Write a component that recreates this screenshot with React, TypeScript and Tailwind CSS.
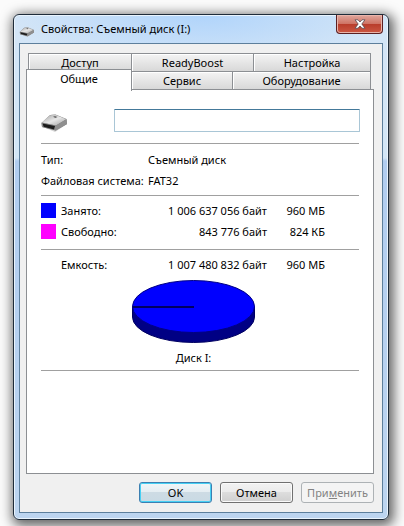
import React from "react";

type UsageRow = {
  label: string;
  bytes: string;
  size: string;
  color?: string;
};

const topTabs = [
  { label: "Доступ", className: "w-[104px]" },
  { label: "ReadyBoost", className: "w-[123px]" },
  { label: "Настройка", className: "flex-1" },
];

const usage: UsageRow[] = [
  { label: "Занято:", bytes: "1 006 637 056 байт", size: "960 МБ", color: "bg-[#0000ff]" },
  { label: "Свободно:", bytes: "843 776 байт", size: "824 КБ", color: "bg-[#ff00ff]" },
];

const capacity: UsageRow[] = [
  { label: "Емкость:", bytes: "1 007 480 832 байт", size: "960 МБ" },
];

const tabClass =
  "-ml-px h-[19px] border border-[#8c8f93] bg-gradient-to-b from-[#f4f4f4] to-[#d8d8d8] text-center shadow-[inset_1px_1px_0_#fff]";

const buttonClass = "h-[21px] w-[73px] rounded-[3px] border text-center";

function DriveIcon({ className }: { className: string }) {
  return (
    <svg viewBox="0 0 27 18" className={className} aria-hidden="true">
      <defs>
        <linearGradient id="driveTop" x1="0" y1="0" x2="1" y2="1">
          <stop offset="0" stopColor="#a0a0a0" />
          <stop offset="0.5" stopColor="#e6e6e6" />
          <stop offset="1" stopColor="#a0a0a0" />
        </linearGradient>
      </defs>
      <path d="M2 13 L14 18 L26 10 L25 8 L13 14Z" fill="#bbb" opacity="0.6" />
      <path d="M0.5 9 L8.5 1.4 Q9.5 0.8 11 0.8 L14.5 0.4 L25.5 5 L26 10 L14.5 16.6 L1 13Z" fill="#7c7c7c" />
      <path d="M0.8 8.6 L8.5 1.6 Q9.5 1 11 1 L14.5 0.8 L25.2 5.2 L15 11.4Z" fill="url(#driveTop)" />
      <path d="M0.5 8.6 L15 11.4 L15 16.6 L1 13Z" fill="#8d8d8d" />
      <path d="M1.6 9.4 L14 12 L13 15.4 L2.6 12.8Z" fill="#1c1c1c" />
      <path d="M15 11.4 L25.5 5.2 L26 10 L15 16.6Z" fill="#8f8f8f" />
      <path d="M12 2.8 L14 2 L16.4 3 L14.4 4Z" fill="#666" />
    </svg>
  );
}

function PieChart() {
  return (
    <svg viewBox="0 0 123 63" className="h-[63px] w-[123px]" role="img" aria-label="Диск I:">
      <path d="M0.5 26.5 V37 A61 25.5 0 0 0 122.5 37 V26.5Z" fill="#000084" stroke="#000060" />
      <ellipse cx="61.5" cy="26.5" rx="61" ry="26" fill="#0000ff" stroke="#000084" />
      <path d="M0.5 27 H62" stroke="#000060" strokeWidth="2" />
    </svg>
  );
}

function TitleBar() {
  return (
    <header className="flex h-7 items-start">
      <DriveIcon className="mt-3 h-[10px] w-4" />
      <h1 className="mt-1.5 ml-1.5 flex-1 text-[11px] leading-4 text-black">
        Свойства: Съемный диск (I:)
      </h1>
      <button
        type="button"
        aria-label="Закрыть"
        className="flex h-[19px] w-[47px] items-center justify-center rounded-b-[4px] border border-t-0 border-[#5b1f22] bg-[linear-gradient(#e0a79d_0%,#cf7465_48%,#b83c2b_50%,#cc5843_100%)] shadow-[inset_0_0_0_1px_#e9b5ab]"
      >
        <svg viewBox="0 0 12 10" className="h-[10px] w-3" aria-hidden="true">
          <path
            d="M1 0.8 H4 L6 3 L8 0.8 H11 L7.8 5 L11 9.2 H8 L6 7 L4 9.2 H1 L4.2 5Z"
            fill="#fff"
            stroke="#574a50"
            strokeWidth="0.8"
          />
        </svg>
      </button>
    </header>
  );
}

function Tabs() {
  return (
    <div role="tablist">
      <div className="flex pr-[3px] pl-[3px]">
        {topTabs.map((tab) => (
          <button key={tab.label} type="button" role="tab" className={`${tabClass} ${tab.className}`}>
            {tab.label}
          </button>
        ))}
      </div>
      <div className="-mt-px flex items-end pr-[3px]">
        <button
          type="button"
          role="tab"
          aria-selected="true"
          className="relative z-10 -mt-[2px] -mb-px h-[22px] w-[106px] border border-b-0 border-[#8c8f93] bg-white pb-[3px] text-center"
        >
          Общие
        </button>
        <button type="button" role="tab" className={`${tabClass} w-[102px]`}>
          Сервис
        </button>
        <button type="button" role="tab" className={`${tabClass} flex-1`}>
          Оборудование
        </button>
      </div>
    </div>
  );
}

function Rule() {
  return <hr className="border-t border-[#a0a0a0]" />;
}

function UsageTable({ rows }: { rows: UsageRow[] }) {
  return (
    <table className="w-full table-fixed">
      <tbody>
        {rows.map((row) => (
          <tr key={row.label} className="h-[21px]">
            <td className="w-5">
              {row.color && <div className={`h-[15px] w-[15px] ${row.color}`} />}
            </td>
            <th scope="row" className="w-[82px] text-left font-normal">
              {row.label}
            </th>
            <td className="w-[124px] text-right">{row.bytes}</td>
            <td className="w-[58px] text-right">{row.size}</td>
            <td />
          </tr>
        ))}
      </tbody>
    </table>
  );
}

function GeneralPanel() {
  return (
    <section
      role="tabpanel"
      className="-mt-px border border-[#8c8f93] bg-white px-[14px] pt-[19px] pb-[102px]"
    >
      <div className="flex items-center">
        <DriveIcon className="mt-1 h-[18px] w-[27px]" />
        <input
          type="text"
          aria-label="Метка тома"
          className="-mr-px ml-[46px] h-[23px] min-w-0 flex-1 rounded-[1px] border border-[#a9c6d6] border-t-[#44799a] bg-white px-1 outline-none"
        />
      </div>
      <div className="mt-[11px]">
        <Rule />
      </div>
      <dl className="grid grid-cols-[107px_1fr] gap-y-[5px] pt-2 pb-[6px]">
        <dt>Тип:</dt>
        <dd>Съемный диск</dd>
        <dt>Файловая система:</dt>
        <dd>FAT32</dd>
      </dl>
      <Rule />
      <div className="pt-1 pb-[7px]">
        <UsageTable rows={usage} />
      </div>
      <Rule />
      <div className="pt-1 pb-[5px]">
        <UsageTable rows={capacity} />
      </div>
      <figure className="mb-1 ml-[91px] w-[123px] text-center">
        <PieChart />
        <figcaption className="mt-[7px]">Диск I:</figcaption>
      </figure>
      <Rule />
    </section>
  );
}

function Footer() {
  return (
    <footer className="flex justify-end gap-2 pt-2">
      <button
        type="button"
        className={`${buttonClass} border-[#3c7fb1] bg-[linear-gradient(#f2f6f8_0%,#e4edf2_48%,#cddbe4_50%,#c9dae4_100%)] shadow-[inset_0_0_0_1px_#46d0f4]`}
      >
        OK
      </button>
      <button
        type="button"
        className={`${buttonClass} border-[#707070] bg-[linear-gradient(#f2f2f2_0%,#ebebeb_48%,#dddddd_50%,#cfcfcf_100%)] shadow-[inset_0_0_0_1px_#fafafa]`}
      >
        Отмена
      </button>
      <button
        type="button"
        disabled
        className={`${buttonClass} border-[#adb2b5] bg-[#f4f4f4] text-[#838383]`}
      >
        При<span className="underline">м</span>енить
      </button>
    </footer>
  );
}

export default function App() {
  return (
    <main className="bg-[#fbfbfb] pt-[14px] pr-[15px] pb-[7px] pl-[13px] font-['Noto_Sans',sans-serif] text-[11px] leading-4 text-black">
      <div className="rounded-[6px] border border-[#1f2c3a] bg-[radial-gradient(ellipse_190px_50px_at_50%_0px,#b0d4fb_0%,#b0d4fb00_100%),linear-gradient(#d3e5f7_0px,#d3e6f6_143px,#b1cdf0_146px,#bdd5f0_100%)] px-[5px] pb-[6px] shadow-[inset_0_0_0_1px_#eaf4fd,2px_3px_12px_3px_#666]">
        <TitleBar />
        <div className="border border-[#5d7f9c] bg-[#f0f0f0] pt-[9px] pr-2 pb-[9px] pl-[6px]">
          <Tabs />
          <GeneralPanel />
          <Footer />
        </div>
      </div>
    </main>
  );
}
